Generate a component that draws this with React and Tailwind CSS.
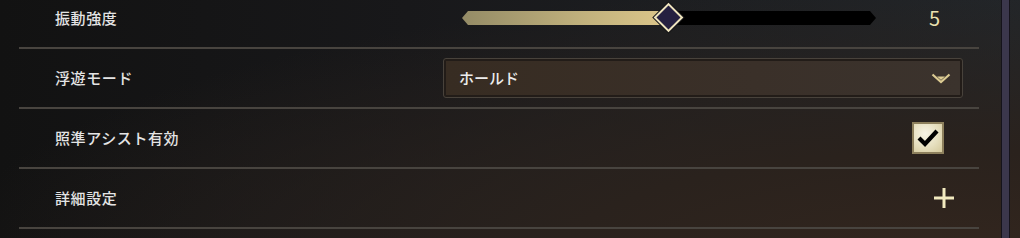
import React from "react";

const font = { fontFamily: '"Noto Sans CJK JP", "Noto Sans", sans-serif' };

function Separator() {
  return <div className="h-[2px] bg-[#48443f]" />;
}

function Row({ label, children }) {
  return (
    <div className="flex h-[58px] items-center pl-[36px] pr-[16px]">
      <div className="w-[388px] text-[15px] font-medium text-[#e4e4e4] tracking-[0.6px]">{label}</div>
      <div className="flex flex-1 items-center">{children}</div>
    </div>
  );
}

function Slider() {
  return (
    <div className="flex items-center">
      <div className="relative ml-[19px] h-[14px] w-[414px]">
        <div className="flex h-full w-full [clip-path:polygon(6px_0,calc(100%-6px)_0,100%_50%,calc(100%-6px)_100%,6px_100%,0_50%)]">
          <div className="h-full w-[206px] bg-[linear-gradient(90deg,#948b66,#c2b27d_60%,#dcc68a)]" />
          <div className="h-full flex-1 bg-black" />
        </div>
        <div className="absolute left-[196px] top-[-4px] h-[21px] w-[21px] rotate-45 border-2 border-[#efe5bd] bg-[#252040] shadow-[0_0_0_1px_#151515]" />
      </div>
      <span className="ml-[53px] text-[20px] leading-none text-[#eae0ae]">5</span>
    </div>
  );
}

function Dropdown() {
  return (
    <div className="h-[40px] w-[520px] rounded-[3px] border border-[#48423b] bg-[#221c18] p-[2px]">
      <div className="flex h-full items-center justify-between bg-[linear-gradient(90deg,#372c22,#3a3029_60%,#3b332d)] pl-[13px] pr-[9px]">
        <span className="text-[15px] font-medium text-[#ececec]">ホールド</span>
        <svg width="20" height="11" viewBox="0 0 20 11">
          <polyline points="1.5,1.5 10,9 18.5,1.5" fill="none" stroke="#dccb92" strokeWidth="2.2" />
          <polygon points="6,3.5 14,3.5 10,7" fill="#dccb92" />
        </svg>
      </div>
    </div>
  );
}

function Checkbox() {
  return (
    <div className="ml-[469px] flex h-[32px] w-[32px] items-center justify-center border-2 border-[#8d805d] bg-[radial-gradient(circle_at_40%_35%,#f7f4e6,#e6dfbf_55%,#d3c89b)]">
      <svg width="24" height="22" viewBox="0 0 24 22">
        <polyline points="3,11 9,17 21,4" fill="none" stroke="#000" strokeWidth="4.2" strokeLinejoin="miter" />
      </svg>
    </div>
  );
}

function Plus() {
  return (
    <svg className="ml-[491px]" width="20" height="20" viewBox="0 0 20 20">
      <rect x="8.5" y="0" width="3" height="20" fill="#f2eabf" />
      <rect x="0" y="8.5" width="20" height="3" fill="#f2eabf" />
    </svg>
  );
}

export default function App() {
  return (
    <div
      style={font}
      className="flex h-[238px] w-[1020px] overflow-hidden bg-[radial-gradient(ellipse_at_95%_110%,#33261e_0%,#2a221d_30%,transparent_75%),linear-gradient(90deg,#121212_0%,#18181a_40%,#22262a_100%)]"
    >
      <div className="flex-1 pl-[19px] pr-[22px]">
        <div className="-mt-[11px]">
          <Row label="振動強度">
            <Slider />
          </Row>
          <Separator />
          <Row label="浮遊モード">
            <Dropdown />
          </Row>
          <Separator />
          <Row label="照準アシスト有効">
            <Checkbox />
          </Row>
          <Separator />
          <Row label="詳細設定">
            <Plus />
          </Row>
          <Separator />
        </div>
      </div>
      <div className="h-full w-[9px] border-x border-[#15131b] bg-[#3b374c]" />
      <div className="w-[10px]" />
    </div>
  );
}
